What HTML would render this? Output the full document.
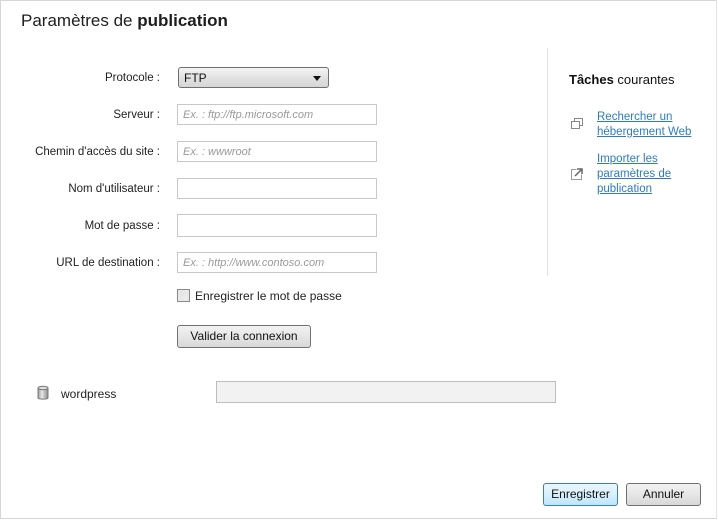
<!DOCTYPE html>
<html><head><meta charset="utf-8"><style>
*{margin:0;padding:0;box-sizing:border-box}
body{width:718px;height:520px;background:#fff;font-family:"Liberation Sans",sans-serif;font-size:11.5px;color:#222;position:relative;overflow:hidden}
.frame{position:absolute;left:0;top:0;width:717px;height:519px;border:1px solid #d6d6d6;border-right-color:#e4e4e4}
.a{position:absolute}
.t{left:21px;top:11px;font-size:17px;color:#1e1e1e}
.lbl{right:558px;text-align:right;white-space:nowrap}
.in{left:177px;width:200px;height:21px;border:1px solid #c8c8c8;background:#fff;color:#999;font-style:italic;font-size:11px;padding:4px 5px}
.btn{border:1px solid #707070;border-radius:3px;background:linear-gradient(#f2f2f2,#e6e6e6 50%,#d8d8d8);text-align:center;line-height:21px;font-size:12px;color:#111}
a{color:#2e7cbf;text-decoration:underline}
</style></head><body>
<div class="frame"></div>
<div class="a t">Paramètres de <b>publication</b></div>

<div class="a lbl" style="top:72px">Protocole :</div>
<div class="a" style="left:178px;top:67px;width:151px;height:21px;border:1px solid #707070;border-radius:3px;background:linear-gradient(#f4f4f4,#e2e2e2 50%,#d6d6d6);padding:3px 5px;font-size:12px;color:#111">FTP<span style="position:absolute;right:7px;top:8px;border:4px solid transparent;border-top:5px solid #111;border-bottom:0"></span></div>

<div class="a lbl" style="top:109px">Serveur :</div>
<div class="a in" style="top:104px">Ex. : ftp://ftp.microsoft.com</div>
<div class="a lbl" style="top:146px">Chemin d'accès du site :</div>
<div class="a in" style="top:141px">Ex. : wwwroot</div>
<div class="a lbl" style="top:183px">Nom d'utilisateur :</div>
<div class="a in" style="top:178px"></div>
<div class="a lbl" style="top:220px">Mot de passe :</div>
<div class="a in" style="top:214px;height:23px"></div>
<div class="a lbl" style="top:257px">URL de destination :</div>
<div class="a in" style="top:252px">Ex. : http://www.contoso.com</div>

<div class="a" style="left:177px;top:289px;width:13px;height:13px;border:1px solid #8a8a8a;background:linear-gradient(135deg,#ddd,#f4f4f4);box-shadow:inset 0 0 0 2px #e8e8e8"></div>
<div class="a" style="left:195px;top:289px;font-size:12px">Enregistrer le mot de passe</div>

<div class="a btn" style="left:177px;top:325px;width:134px;height:23px">Valider la connexion</div>

<svg class="a" style="left:37px;top:385px" width="12" height="16" viewBox="0 0 12 16"><defs><linearGradient id="g"><stop offset="0" stop-color="#9a9a9a"/><stop offset=".4" stop-color="#e8e8e8"/><stop offset="1" stop-color="#8a8a8a"/></linearGradient></defs><path d="M1 3v10c0 1.5 10 1.5 10 0V3" fill="url(#g)" stroke="#777"/><ellipse cx="6" cy="3" rx="5" ry="1.8" fill="#ddd" stroke="#777"/></svg>
<div class="a" style="left:61px;top:387px;font-size:12px">wordpress</div>
<div class="a" style="left:216px;top:381px;width:340px;height:22px;border:1px solid #bdbdbd;background:#f2f2f2"></div>

<div class="a" style="left:547px;top:48px;width:1px;height:228px;background:#e2e2e2"></div>
<div class="a" style="left:569px;top:72px;font-size:13px;color:#111"><b>Tâches</b> courantes</div>
<svg class="a" style="left:571px;top:118px" width="12" height="12" viewBox="0 0 12 12" fill="none" stroke="#888"><rect x="3.5" y="0.5" width="8" height="7"/><rect x="0.5" y="3.5" width="8" height="7" fill="#fff"/></svg>
<div class="a" style="left:597px;top:110px;line-height:15px"><a>Rechercher un<br>hébergement Web</a></div>
<svg class="a" style="left:571px;top:168px" width="12" height="12" viewBox="0 0 12 12" fill="none" stroke="#999"><path d="M5.5 1.5H.5v10h10V6.5"/><path d="M4 8l7-7M6 1h5v5" stroke="#666" stroke-width="1.5"/></svg>
<div class="a" style="left:597px;top:152px;line-height:15px"><a>Importer les<br>paramètres de<br>publication</a></div>

<div class="a btn" style="left:543px;top:483px;width:75px;height:23px;border-color:#3c7fb1;background:linear-gradient(#eaf6fd,#d9f0fc 50%,#bee6fd)">Enregistrer</div>
<div class="a btn" style="left:626px;top:483px;width:75px;height:23px">Annuler</div>
</body></html>
